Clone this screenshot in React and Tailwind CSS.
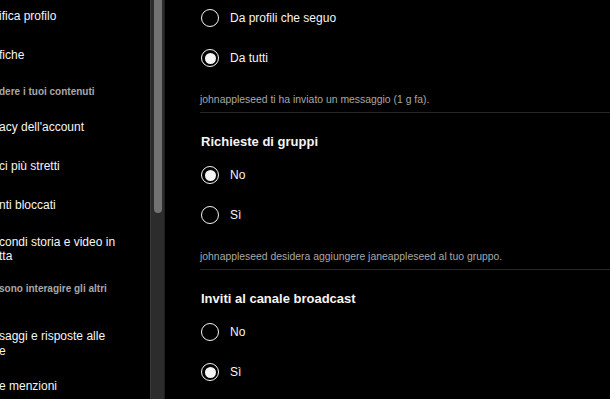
import React from "react";

const font = { fontFamily: '"Liberation Sans", Arial, sans-serif' };

function Radio({ checked, label }) {
  return (
    <div className="h-[40px] flex items-center gap-[11px]">
      <div className="ml-px w-[18px] h-[18px] rounded-full border-[1.5px] border-[#f5f5f5] flex items-center justify-center shrink-0">
        {checked && <div className="w-[11px] h-[11px] rounded-full bg-[#f5f5f5]" />}
      </div>
      <span className="text-[12px] leading-[14px] text-[#f5f5f5]">{label}</span>
    </div>
  );
}

function Note({ children }) {
  return (
    <div className="pt-[15px] pb-[5px] text-[10.4px] leading-[14px] text-[#a8a8a8] whitespace-nowrap">
      {children}
    </div>
  );
}

function Sep() {
  return <div className="h-px bg-[#262626]" />;
}

function Heading({ children }) {
  return (
    <div className="pt-[21px] pb-[5px] pl-px text-[13px] leading-[16px] font-bold text-[#f5f5f5] whitespace-nowrap">
      {children}
    </div>
  );
}

function Item({ children, h }) {
  return (
    <div className={`flex items-center text-[12px] leading-[14.5px] text-[#f5f5f5] whitespace-nowrap ${h}`}>
      <div>{children}</div>
    </div>
  );
}

export default function App() {
  return (
    <div className="w-[610px] h-[399px] bg-black overflow-hidden flex" style={font}>
      {/* Sidebar */}
      <div className="w-[150px] shrink-0 overflow-hidden">
        <div className="flex flex-col -mt-[3px] -ml-px">
          <Item h="h-[39px]">ifica profilo</Item>
          <Item h="h-[39px]">fiche</Item>
          <div className="h-[33px] flex items-center text-[10px] leading-[14px] font-bold text-[#a8a8a8] whitespace-nowrap">
            dere i tuoi contenuti
          </div>
          <Item h="h-[39px]">acy dell'account</Item>
          <Item h="h-[39px]">ci più stretti</Item>
          <Item h="h-[39px]">nti bloccati</Item>
          <Item h="h-[48px]">
            condi storia e video in
            <br />
            tta
          </Item>
          <div className="h-[47px] pt-[9px] text-[10px] leading-[14px] font-bold text-[#a8a8a8] whitespace-nowrap">
            sono interagire gli altri
          </div>
          <Item h="h-[47px]">
            saggi e risposte alle
            <br />
            e
          </Item>
          <Item h="h-[39px]">e menzioni</Item>
        </div>
      </div>

      {/* Scrollbar */}
      <div className="w-[15px] shrink-0 bg-[#2c2c2c] border-l border-[#3a3a3a] border-r border-r-[#1e1e1e] flex justify-center">
        <div className="w-[8px] h-[213px] rounded-b-full bg-[#727272]" />
      </div>

      {/* Main */}
      <div className="flex-1 pl-[35px] overflow-hidden">
        <div className="flex flex-col -mt-[2px]">
          <Radio label="Da profili che seguo" />
          <Radio checked label="Da tutti" />
          <Note>johnappleseed ti ha inviato un messaggio (1 g fa).</Note>
          <Sep />
          <Heading>Richieste di gruppi</Heading>
          <Radio checked label="No" />
          <Radio label="Sì" />
          <Note>johnappleseed desidera aggiungere janeappleseed al tuo gruppo.</Note>
          <Sep />
          <Heading>Inviti al canale broadcast</Heading>
          <Radio label="No" />
          <Radio checked label="Sì" />
        </div>
      </div>
    </div>
  );
}
